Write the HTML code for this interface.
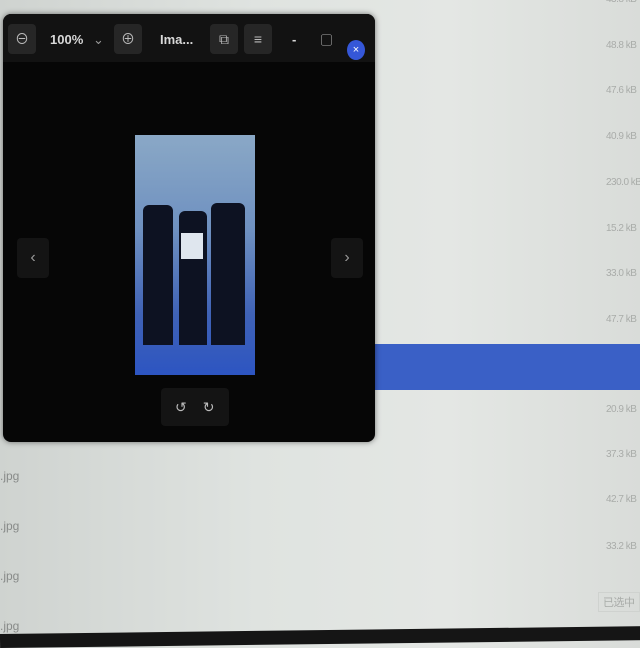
<!DOCTYPE html>
<html><head><meta charset="utf-8"><style>
body{margin:0;width:640px;height:640px;overflow:hidden;position:relative;background:linear-gradient(90deg,#cfd3d0 0%,#dfe3e0 40%,#e4e7e4 70%,#d9dcd9 100%);font-family:"Liberation Sans","Noto Sans CJK SC",sans-serif}
.s{position:absolute;left:606px;font-size:10px;color:#a9aca9;letter-spacing:-0.5px;white-space:nowrap}
.j{position:absolute;left:0;font-size:12px;color:#888b89}
#sel{position:absolute;left:360px;top:344px;width:280px;height:46px;background:#3a60c6}
#win{position:absolute;left:3px;top:14px;width:372px;height:428px;background:#060606;border-radius:8px;box-shadow:0 0 6px rgba(0,0,0,.5)}
#tb{position:absolute;left:0;top:0;width:100%;height:48px;background:#121212;border-radius:8px 8px 0 0}
.b{position:absolute;top:10px;width:28px;height:30px;background:#262626;border-radius:4px;color:#bbb;font-size:14px;text-align:center;line-height:30px}
.t{position:absolute;color:#d8d8d8;font-weight:bold;font-size:13px;top:18px}
#photo{position:absolute;left:132px;top:121px;width:120px;height:240px;background:linear-gradient(180deg,#8aa8c6 0%,#6e90c0 40%,#3f62b6 75%,#2d55c2 100%)}
.p{position:absolute;background:#0d1222;border-radius:6px 6px 0 0}
.nav{position:absolute;width:32px;height:40px;background:#141414;border-radius:4px;color:#999;text-align:center;line-height:40px;font-size:16px}
</style></head><body>
<div class="s" style="top:-6px">43.8 kB</div>
<div class="s" style="top:40px">48.8 kB</div>
<div class="s" style="top:85px">47.6 kB</div>
<div class="s" style="top:131px">40.9 kB</div>
<div class="s" style="top:177px">230.0 kB</div>
<div class="s" style="top:223px">15.2 kB</div>
<div class="s" style="top:268px">33.0 kB</div>
<div class="s" style="top:314px">47.7 kB</div>
<div id="sel"></div>
<div class="s" style="top:404px">20.9 kB</div>
<div class="s" style="top:449px">37.3 kB</div>
<div class="s" style="top:494px">42.7 kB</div>
<div class="s" style="top:541px">33.2 kB</div>
<div class="s" style="top:592px;left:598px;font-size:11px;border:1px solid #cfd2cf;padding:1px 4px">已选中</div>
<div class="j" style="top:469px">.jpg</div>
<div class="j" style="top:519px">.jpg</div>
<div class="j" style="top:569px">.jpg</div>
<div class="j" style="top:619px">.jpg</div>
<div style="position:absolute;left:0;top:630px;width:660px;height:14px;background:#151515;transform:rotate(-0.7deg)"></div>
<div id="win">
 <div id="tb">
  <div class="b" style="left:5px">⊖</div>
  <div class="t" style="left:47px">100%</div>
  <div class="t" style="left:90px;font-weight:normal;color:#999">⌄</div>
  <div class="b" style="left:111px">⊕</div>
  <div class="t" style="left:157px">Ima...</div>
  <div class="b" style="left:207px">⧉</div>
  <div class="b" style="left:241px">≡</div>
  <div class="t" style="left:289px">-</div>
  <div class="t" style="left:318px;font-size:11px">▢</div>
  <div style="position:absolute;left:344px;top:26px;width:18px;height:20px;border-radius:50%;background:#3557d8;color:#fff;font-size:11px;text-align:center;line-height:20px">×</div>
 </div>
 <div id="photo">
  <div class="p" style="left:8px;top:70px;width:30px;height:140px"></div>
  <div class="p" style="left:44px;top:76px;width:28px;height:134px"></div>
  <div class="p" style="left:76px;top:68px;width:34px;height:142px"></div>
  <div style="position:absolute;left:46px;top:98px;width:22px;height:26px;background:#dfe6ee"></div>
 </div>
 <div class="nav" style="left:14px;top:224px">‹</div>
 <div class="nav" style="left:328px;top:224px">›</div>
 <div style="position:absolute;left:158px;top:374px;width:68px;height:38px;background:#141414;border-radius:4px;color:#bbb;font-size:14px;line-height:38px;text-align:center;letter-spacing:16px;padding-left:14px;box-sizing:border-box">↺↻</div>
</div>
</body></html>
